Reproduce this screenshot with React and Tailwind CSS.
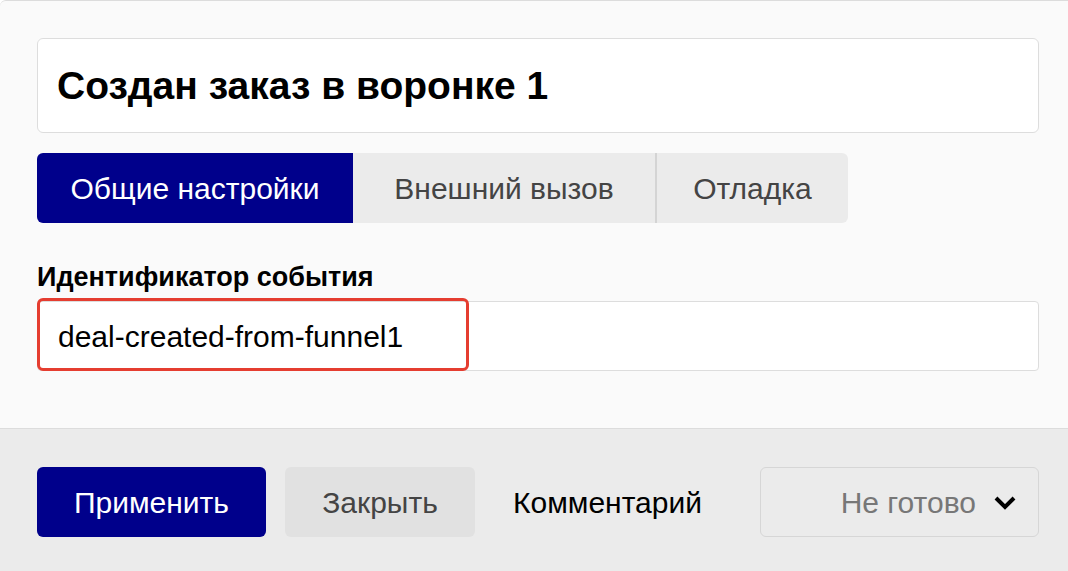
const tabs = [
    { label: 'Общие настройки', width: 'w-[316px]' },
    { label: 'Внешний вызов', width: 'w-[302px]' },
    { label: 'Отладка', width: 'w-[193px]' },
];

export default function App() {
    const active = 0;

    return (
        <div
            className="w-[1068px] h-[571px] flex flex-col overflow-hidden bg-[#fafafa] border-t border-[#dcdcdc] rounded-tl-[6px]"
            style={{ fontFamily: '"Liberation Sans", Arial, sans-serif' }}
        >
            {/* Body */}
            <div className="flex-1 pl-[37px] pr-[29px] pt-[37px]">
                <div className="h-[95px] flex items-center px-[19px] bg-white border border-[#dddddd] rounded-[6px]">
                    <h1 className="text-[39px] font-bold text-black leading-none">
                        Создан заказ в воронке 1
                    </h1>
                </div>

                {/* Tabs */}
                <div className="mt-[20px] flex">
                    {tabs.map((tab, index) => (
                        <button
                            key={tab.label}
                            type="button"
                            className={`${tab.width} h-[70px] text-[30px] ${
                                index === active
                                    ? 'bg-[#00008b] text-white'
                                    : 'bg-[#ebebeb] text-[#444444]'
                            } ${index === 0 ? 'rounded-l-[6px]' : ''} ${
                                index === tabs.length - 1 ? 'rounded-r-[6px]' : ''
                            } ${index === 2 ? 'border-l-2 border-[#d4d4d4]' : ''}`}
                        >
                            {tab.label}
                        </button>
                    ))}
                </div>

                {/* Event id */}
                <label className="block mt-[34px] text-[27px] font-bold text-black leading-[40px]">
                    Идентификатор события
                </label>
                <div className="relative mt-[4px] h-[70px] bg-white border border-[#dddddd] rounded-[4px] flex items-center px-[20px]">
                    <span className="text-[30px] text-black">deal-created-from-funnel1</span>
                    <div className="absolute -left-px -top-[4px] w-[432px] h-[73px] border-[3px] border-[#e53d30] rounded-[6px] pointer-events-none"></div>
                </div>
            </div>

            {/* Footer */}
            <div className="h-[143px] shrink-0 bg-[#ebebeb] border-t border-[#dcdcdc] pl-[37px] pr-[29px] flex items-center gap-[19px] pt-[4px]">
                <button
                    type="button"
                    className="h-[70px] w-[229px] bg-[#00008b] text-white text-[30px] rounded-[6px]"
                >
                    Применить
                </button>
                <button
                    type="button"
                    className="h-[70px] w-[190px] bg-[#e1e1e1] text-[#444444] text-[30px] rounded-[6px]"
                >
                    Закрыть
                </button>
                <button type="button" className="ml-[19px] text-[30px] text-black">
                    Комментарий
                </button>
                <div className="ml-auto h-[70px] w-[279px] border border-[#d6d6d6] rounded-[6px] flex items-center justify-end gap-[17px] pr-[21px]">
                    <span className="text-[30px] text-[#777777]">Не готово</span>
                    <svg width="24" height="15" viewBox="0 0 24 15" fill="none">
                        <polyline
                            points="3,3 12,12 21,3"
                            stroke="#000"
                            strokeWidth="4"
                            strokeLinejoin="miter"
                        />
                    </svg>
                </div>
            </div>
        </div>
    );
}
